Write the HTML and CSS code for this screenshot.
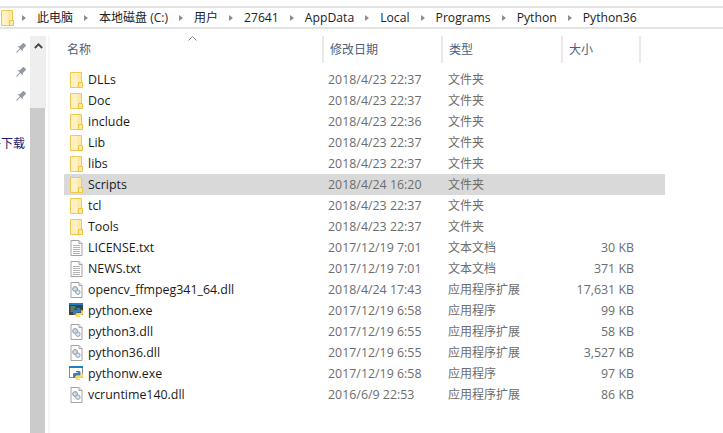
FILE: index.html
```html
<!DOCTYPE html>
<html lang="zh-CN">
<head>
<meta charset="utf-8">
<title>Python36</title>
<link rel="stylesheet" href="styles.css">
</head>
<body>
<svg class="defs" width="0" height="0" aria-hidden="true">
  <defs>
    <symbol id="folder" viewBox="0 0 13 16">
      <path d="M.5.5h11v15H.5z" fill="#ffeaa8" stroke="#efc94f"/>
      <path d="M1 1h6v14H1z" fill="#fff1c4"/>
      <path d="M8.500 15.500v-5h4v5z" fill="#ffeaa8" stroke="#eec443"/>
    </symbol>
    <symbol id="text" viewBox="0 0 12 16">
      <path d="M.5.5h8l3 3v12H.5z" fill="#fff" stroke="#a3a3a3"/>
      <path d="M8.500.5v3h3" fill="#eee" stroke="#a3a3a3"/>
      <path d="M2.500 5.500h7M2.500 7.500h7M2.500 9.500h7M2.500 11.500h7M2.500 13.500h7" stroke="#b4b4b4"/>
    </symbol>
    <symbol id="dll" viewBox="0 0 12 16">
      <path d="M.5.5h8l3 3v12H.5z" fill="#fff" stroke="#a3a3a3"/>
      <path d="M8.500.5v3h3" fill="#eee" stroke="#a3a3a3"/>
      <circle cx="4.600" cy="7" r="2.400" fill="#d5dbe0" stroke="#8b959e"/>
      <circle cx="7.400" cy="10.200" r="2.200" fill="#dbe7f2" stroke="#8e9fb0"/>
    </symbol>
    <symbol id="snake" viewBox="0 0 10 10">
      <path d="M3 .5h3.500l1 1V5H3.500L2.300 6.200V7.500H1L0 6.300V3.400L1 2.500h3.800V1.800H3z" fill="#3f7cb0"/>
      <path d="M9 2.600l1 1v3l-1 1H5.200v.7H7v1.200H3.500l-1-1V6.300l1-.8h4.700V2.600z" fill="#ffd850"/>
    </symbol>
    <symbol id="pin" viewBox="0 0 10 10">
      <g transform="rotate(45 5 5)" fill="#8f98a3">
        <path d="M3-.5h4v5.200l1.700 1.500H1.300L3 4.700z"/>
        <path d="M4.500 6h1v5.500h-1z"/>
      </g>
    </symbol>
  </defs>
</svg>
<div class="top-gap"></div>
<nav class="address">
  <svg class="address-folder" width="13" height="16"><use href="#folder"/></svg>
  <span class="sep"></span><span>此电脑</span>
  <span class="sep"></span><span>本地磁盘 (C:)</span>
  <span class="sep"></span><span>用户</span>
  <span class="sep"></span><span class="latin">27641</span>
  <span class="sep"></span><span class="latin">AppData</span>
  <span class="sep"></span><span class="latin">Local</span>
  <span class="sep"></span><span class="latin">Programs</span>
  <span class="sep"></span><span class="latin">Python</span>
  <span class="sep"></span><span class="latin">Python36</span>
</nav>
<div class="window">
  <aside class="nav">
    <div class="pins">
      <svg class="pin" width="10" height="10"><use href="#pin"/></svg>
      <svg class="pin" width="10" height="10"><use href="#pin"/></svg>
      <svg class="pin" width="10" height="10"><use href="#pin"/></svg>
      <div class="nav-label"><span>文件下载</span></div>
    </div>
    <div class="scrollbar">
      <div class="scroll-track">
        <svg width="9" height="6" viewBox="0 0 9 6"><path d="M.8 5L4.500 1.300 8.200 5" fill="none" stroke="#444" stroke-width="1.800"/></svg>
      </div>
      <div class="scroll-thumb"></div>
    </div>
    <div class="nav-edge"></div>
  </aside>
  <main class="list">
    <div class="head">
      <div class="cell head-name">名称<svg class="sort" width="9" height="5" viewBox="0 0 9 5"><path d="M.5 4.500l4-4 4 4" fill="none" stroke="#8a8a8a"/></svg></div>
      <div class="cell">修改日期</div>
      <div class="cell">类型</div>
      <div class="cell">大小</div>
    </div>
    <div class="rows">
      <div class="row"><div class="name"><svg class="ic" width="13" height="16"><use href="#folder"/></svg>DLLs</div><div class="date">2018/4/23 22:37</div><div class="type">文件夹</div><div class="size"></div></div>
      <div class="row"><div class="name"><svg class="ic" width="13" height="16"><use href="#folder"/></svg>Doc</div><div class="date">2018/4/23 22:37</div><div class="type">文件夹</div><div class="size"></div></div>
      <div class="row"><div class="name"><svg class="ic" width="13" height="16"><use href="#folder"/></svg>include</div><div class="date">2018/4/23 22:36</div><div class="type">文件夹</div><div class="size"></div></div>
      <div class="row"><div class="name"><svg class="ic" width="13" height="16"><use href="#folder"/></svg>Lib</div><div class="date">2018/4/23 22:37</div><div class="type">文件夹</div><div class="size"></div></div>
      <div class="row"><div class="name"><svg class="ic" width="13" height="16"><use href="#folder"/></svg>libs</div><div class="date">2018/4/23 22:37</div><div class="type">文件夹</div><div class="size"></div></div>
      <div class="row selected"><div class="name"><svg class="ic" width="13" height="16"><use href="#folder"/></svg>Scripts</div><div class="date">2018/4/24 16:20</div><div class="type">文件夹</div><div class="size"></div></div>
      <div class="row"><div class="name"><svg class="ic" width="13" height="16"><use href="#folder"/></svg>tcl</div><div class="date">2018/4/23 22:37</div><div class="type">文件夹</div><div class="size"></div></div>
      <div class="row"><div class="name"><svg class="ic" width="13" height="16"><use href="#folder"/></svg>Tools</div><div class="date">2018/4/23 22:37</div><div class="type">文件夹</div><div class="size"></div></div>
      <div class="row"><div class="name"><svg class="ic" width="13" height="16"><use href="#text"/></svg>LICENSE.txt</div><div class="date">2017/12/19 7:01</div><div class="type">文本文档</div><div class="size">30 KB</div></div>
      <div class="row"><div class="name"><svg class="ic" width="13" height="16"><use href="#text"/></svg>NEWS.txt</div><div class="date">2017/12/19 7:01</div><div class="type">文本文档</div><div class="size">371 KB</div></div>
      <div class="row"><div class="name"><svg class="ic" width="13" height="16"><use href="#dll"/></svg>opencv_ffmpeg341_64.dll</div><div class="date">2018/4/24 17:43</div><div class="type">应用程序扩展</div><div class="size">17,631 KB</div></div>
      <div class="row"><div class="name"><svg class="ic exe" width="14" height="15" viewBox="0 0 14 15"><rect width="14" height="12" fill="#3c4246"/><rect width="14" height="2" fill="#1f7fc4"/><path d="M1.500 4h5M1.500 6h4M1.500 8h3" stroke="#6fbf6f"/><use href="#snake" x="4" y="4" width="10" height="11"/></svg>python.exe</div><div class="date">2017/12/19 6:58</div><div class="type">应用程序</div><div class="size">99 KB</div></div>
      <div class="row"><div class="name"><svg class="ic" width="13" height="16"><use href="#dll"/></svg>python3.dll</div><div class="date">2017/12/19 6:55</div><div class="type">应用程序扩展</div><div class="size">58 KB</div></div>
      <div class="row"><div class="name"><svg class="ic" width="13" height="16"><use href="#dll"/></svg>python36.dll</div><div class="date">2017/12/19 6:55</div><div class="type">应用程序扩展</div><div class="size">3,527 KB</div></div>
      <div class="row"><div class="name"><svg class="ic exe" width="14" height="15" viewBox="0 0 14 15"><rect x=".5" y=".5" width="13" height="11" fill="#fff" stroke="#7f8c96"/><rect width="14" height="2" fill="#1f7fc4"/><use href="#snake" x="4" y="4" width="10" height="11"/></svg>pythonw.exe</div><div class="date">2017/12/19 6:58</div><div class="type">应用程序</div><div class="size">97 KB</div></div>
      <div class="row"><div class="name"><svg class="ic" width="13" height="16"><use href="#dll"/></svg>vcruntime140.dll</div><div class="date">2016/6/9 22:53</div><div class="type">应用程序扩展</div><div class="size">86 KB</div></div>
    </div>
  </main>
</div>
</body>
</html>
```
FILE: styles.css
```css
* { box-sizing: border-box; }
html, body { height: 100%; }
body {
  margin: 0;
  background: #fff;
  overflow: hidden;
  display: flex;
  flex-direction: column;
  font: 12px/21px "Open Sans", "Noto Sans CJK SC", sans-serif;
  color: #1e1e1e;
}
.defs { position: absolute; }
.top-gap { height: 6px; flex: none; }
.address {
  flex: none;
  height: 23px;
  border-top: 2px solid #e3e3e3;
  border-bottom: 2px solid #e3e3e3;
  display: flex;
  align-items: center;
  padding-left: 1px;
  white-space: nowrap;
  color: #222;
}
.address-folder { flex: none; margin-right: -3px; }
.latin { font-size: 12.200px; }
.sep {
  width: 0;
  height: 0;
  margin: 0 11px;
  border-left: 4px solid #8d8d8d;
  border-top: 3.500px solid transparent;
  border-bottom: 3.500px solid transparent;
}
.window { flex: 1; display: flex; min-height: 0; padding-top: 7px; }
.nav { flex: none; width: 64px; display: flex; }
.pins {
  width: 30px;
  display: flex;
  flex-direction: column;
  align-items: center;
}
.pin { flex: none; margin: 7px 0 7px 12px; }
.nav-label {
  width: 100%;
  display: flex;
  justify-content: flex-end;
  overflow: hidden;
  margin-top: 25px;
  color: #1a1a6e;
  white-space: nowrap;
}
.nav-label span { flex: none; margin-right: 5px; }
.scrollbar { width: 16px; display: flex; flex-direction: column; }
.scroll-track {
  height: 72px;
  flex: none;
  background: #eeeeee;
  display: flex;
  justify-content: center;
  padding-top: 7px;
}
.scroll-thumb { flex: 1; background: #cbcbcb; margin-right: 1px; }
.nav-edge { width: 2px; margin-left: 2px; background: #f5f5f5; }
.list { width: 601px; flex: none; }
.head, .row {
  display: grid;
  grid-template-columns: 258px 119px 120px 80px 24px;
}
.head { height: 27px; margin-bottom: 6px; }
.cell {
  color: #4c607a;
  padding: 3px 0 0 6px;
  border-left: 2px solid #e9e9e9;
  position: relative;
}
.head > .cell:last-child { border-right: 2px solid #e9e9e9; }
.head-name { border-left: 0; padding-left: 3px; }
.sort { position: absolute; left: 124px; top: 0; }
.row { height: 21px; }
.selected { background: #d9d9d9; }
.name { display: flex; align-items: center; padding-left: 6px; color: #1a1a1a; white-space: nowrap; font-size: 12.400px; }
.ic { flex: none; margin-right: 5px; }
.exe { margin-left: -1px; margin-right: 5px; }
.date { padding-left: 6px; color: #6d6d6d; white-space: nowrap; font-size: 12.400px; }
.type { padding-left: 7px; color: #6d6d6d; white-space: nowrap; }
.size { text-align: right; padding-right: 7px; color: #6d6d6d; font-size: 12.400px; }
```
